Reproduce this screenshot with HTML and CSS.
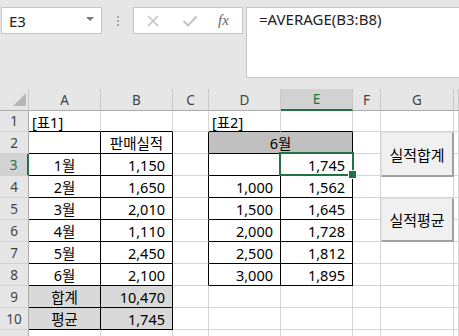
FILE: index.html
```html
<!DOCTYPE html>
<html lang="ko">
<head>
  <meta charset="UTF-8">
  <title>Excel - 판매실적</title>
  <link rel="stylesheet" href="styles.css">
</head>
<body>
  <div class="toolbar">
    <div class="namebox">
      <span>E3</span>
      <span class="caret"></span>
    </div>
    <div class="grip"><i></i><i></i><i></i></div>
    <div class="fxbtns">
      <svg width="14" height="14" viewBox="0 0 14 14"><path d="M2 2 L12 12 M12 2 L2 12" stroke="#c4c4c4" stroke-width="1.6" fill="none"/></svg>
      <svg width="16" height="14" viewBox="0 0 16 14"><path d="M1.5 7 L6 11.5 L14.5 2.5" stroke="#c4c4c4" stroke-width="2" fill="none"/></svg>
      <span class="fx">fx</span>
    </div>
    <div class="formula">=AVERAGE(B3:B8)</div>
  </div>

  <div class="sheet">
    <!-- column headers -->
    <div class="h corner"><span class="tri"></span></div>
    <div class="h">A</div>
    <div class="h">B</div>
    <div class="h">C</div>
    <div class="h">D</div>
    <div class="h on-col">E</div>
    <div class="h">F</div>
    <div class="h">G</div>
    <div class="h"></div>

    <!-- row 1 -->
    <div class="rh">1</div>
    <div class="c lbl bt">[표1]</div>
    <div class="c bt"></div>
    <div class="c"></div>
    <div class="c lbl bt">[표2]</div>
    <div class="c bt"></div>
    <div class="c"></div>
    <div class="c"></div>
    <div class="c"></div>

    <!-- row 2 -->
    <div class="rh">2</div>
    <div class="c tb"></div>
    <div class="c tb ctr">판매실적</div>
    <div class="c rb"></div>
    <div class="c tb ctr mg span2">6월</div>
    <div class="c"></div>
    <div class="c"></div>
    <div class="c"></div>

    <!-- row 3 -->
    <div class="rh on-row">3</div>
    <div class="c tb ctr">1월</div>
    <div class="c tb num">1,150</div>
    <div class="c rb"></div>
    <div class="c tb"></div>
    <div class="c tb num sel">1,745</div>
    <div class="c"></div>
    <div class="c"></div>
    <div class="c"></div>

    <!-- row 4 -->
    <div class="rh">4</div>
    <div class="c tb ctr">2월</div>
    <div class="c tb num">1,650</div>
    <div class="c rb"></div>
    <div class="c tb num">1,000</div>
    <div class="c tb num">1,562</div>
    <div class="c"></div>
    <div class="c"></div>
    <div class="c"></div>

    <!-- row 5 -->
    <div class="rh">5</div>
    <div class="c tb ctr">3월</div>
    <div class="c tb num">2,010</div>
    <div class="c rb"></div>
    <div class="c tb num">1,500</div>
    <div class="c tb num">1,645</div>
    <div class="c"></div>
    <div class="c"></div>
    <div class="c"></div>

    <!-- row 6 -->
    <div class="rh">6</div>
    <div class="c tb ctr">4월</div>
    <div class="c tb num">1,110</div>
    <div class="c rb"></div>
    <div class="c tb num">2,000</div>
    <div class="c tb num">1,728</div>
    <div class="c"></div>
    <div class="c"></div>
    <div class="c"></div>

    <!-- row 7 -->
    <div class="rh">7</div>
    <div class="c tb ctr">5월</div>
    <div class="c tb num">2,450</div>
    <div class="c rb"></div>
    <div class="c tb num">2,500</div>
    <div class="c tb num">1,812</div>
    <div class="c"></div>
    <div class="c"></div>
    <div class="c"></div>

    <!-- row 8 -->
    <div class="rh">8</div>
    <div class="c tb ctr">6월</div>
    <div class="c tb num">2,100</div>
    <div class="c rb"></div>
    <div class="c tb num">3,000</div>
    <div class="c tb num">1,895</div>
    <div class="c"></div>
    <div class="c"></div>
    <div class="c"></div>

    <!-- row 9 -->
    <div class="rh">9</div>
    <div class="c tb ctr sum">합계</div>
    <div class="c tb num sum">10,470</div>
    <div class="c"></div>
    <div class="c"></div>
    <div class="c"></div>
    <div class="c"></div>
    <div class="c"></div>
    <div class="c"></div>

    <!-- row 10 -->
    <div class="rh">10</div>
    <div class="c tb ctr sum">평균</div>
    <div class="c tb num sum">1,745</div>
    <div class="c"></div>
    <div class="c"></div>
    <div class="c"></div>
    <div class="c"></div>
    <div class="c"></div>
    <div class="c"></div>

    <!-- row 11, only its top edge is in view -->
    <div class="rh"></div>
    <div class="c"></div>
    <div class="c"></div>
    <div class="c"></div>
    <div class="c"></div>
    <div class="c"></div>
    <div class="c"></div>
    <div class="c"></div>
    <div class="c"></div>
  </div>

  <!-- macro buttons float over column G -->
  <button class="macro sum-btn">실적합계</button>
  <button class="macro avg-btn">실적평균</button>
</body>
</html>
```

FILE: styles.css
```css
* {
  margin: 0;
  padding: 0;
  box-sizing: border-box;
}
body {
  width: 459px;
  height: 336px;
  overflow: hidden;
  background: #e6e6e6;
  font-family: "Noto Sans", "Noto Sans CJK KR", sans-serif;
  color: #000;
  position: relative;
}

/* formula bar */
.toolbar {
  height: 89px;
  display: flex;
  align-items: flex-start;
  padding: 7px 0 0 1px;
}
.namebox {
  width: 101px;
  height: 27px;
  background: #fff;
  border: 1px solid #c6c6c6;
  display: flex;
  align-items: center;
  justify-content: space-between;
  padding: 0 7px 0 7px;
  font-size: 15px;
  color: #222;
}
.caret {
  width: 0;
  height: 0;
  border-left: 4px solid transparent;
  border-right: 4px solid transparent;
  border-top: 4px solid #777;
  margin-top: -3px;
}
.grip {
  width: 31px;
  height: 27px;
  display: flex;
  flex-direction: column;
  align-items: center;
  justify-content: center;
  gap: 2px;
}
.grip i {
  width: 2px;
  height: 2px;
  background: #a8a8a8;
}
.fxbtns {
  width: 110px;
  height: 27px;
  background: #fff;
  border: 1px solid #c6c6c6;
  display: flex;
  align-items: center;
  padding-left: 12px;
  gap: 22px;
}
.fx {
  font-family: "Liberation Serif", serif;
  font-style: italic;
  font-size: 15px;
  color: #666;
  margin-left: -2px;
}
.formula {
  flex: 1;
  height: 71px;
  margin-left: 3px;
  background: #fff;
  border: 1px solid #c6c6c6;
  border-right: none;
  padding: 1px 0 0 12px;
  font-size: 15px;
  color: #222;
}

/* sheet */
.sheet {
  display: grid;
  grid-template-columns: 29px 72px 72px 36px 72px 72px 28px 73px 1fr;
  grid-template-rows: 22px 21px repeat(10, 22px);
  font-size: 14.5px;
}
.h {
  background: #e6e6e6;
  border-right: 1px solid #c8c8c8;
  border-bottom: 1px solid #ababab;
  font-size: 13.5px;
  color: #444;
  display: flex;
  align-items: center;
  justify-content: center;
}
.corner {
  position: relative;
}
.tri {
  position: absolute;
  right: 2px;
  bottom: 4px;
  width: 0;
  height: 0;
  border-left: 13px solid transparent;
  border-bottom: 13px solid #b7b7b7;
}
.on-col {
  background: #d2d2d2;
  border-bottom: 2px solid #217346;
  color: #217346;
}
.rh {
  background: #e6e6e6;
  border-right: 1px solid #ababab;
  border-bottom: 1px solid #d0d0d0;
  font-size: 13.5px;
  color: #444;
  display: flex;
  align-items: center;
  justify-content: center;
}
.on-row {
  background: #d2d2d2;
  border-right: 2px solid #217346;
  color: #217346;
}
.c {
  background: #fff;
  border-right: 1px solid #d4d4d4;
  border-bottom: 1px solid #d4d4d4;
  display: flex;
  align-items: center;
  white-space: nowrap;
}
.lbl {
  padding-left: 3px;
}
.ctr {
  justify-content: center;
}
.num {
  justify-content: flex-end;
  padding-right: 7px;
}
.tb {
  border-right-color: #000;
  border-bottom-color: #000;
}
.bt {
  border-bottom-color: #000;
}
.rb {
  border-right-color: #000;
}
.sum {
  background: #d9d9d9;
}
.mg {
  background: #c0c0c0;
}
.span2 {
  grid-column: span 2;
}
.sel {
  position: relative;
}
.sel::before {
  content: "";
  position: absolute;
  left: -2px;
  top: -2px;
  right: -2px;
  bottom: -1px;
  border: 2px solid #217346;
}
.sel::after {
  content: "";
  position: absolute;
  right: -5px;
  bottom: -4px;
  width: 7px;
  height: 7px;
  background: #217346;
  border: 1px solid #fff;
}

/* form buttons */
.macro {
  position: absolute;
  left: 381px;
  width: 73px;
  background: #f0f0f0;
  border: 1px solid #e0e0e0;
  border-right: 2px solid #a0a0a0;
  border-bottom: 2px solid #a0a0a0;
  font-family: "Noto Sans CJK KR", sans-serif;
  font-size: 15px;
  color: #000;
}
.sum-btn {
  top: 132px;
  height: 45px;
}
.avg-btn {
  top: 198px;
  height: 44px;
}
```
